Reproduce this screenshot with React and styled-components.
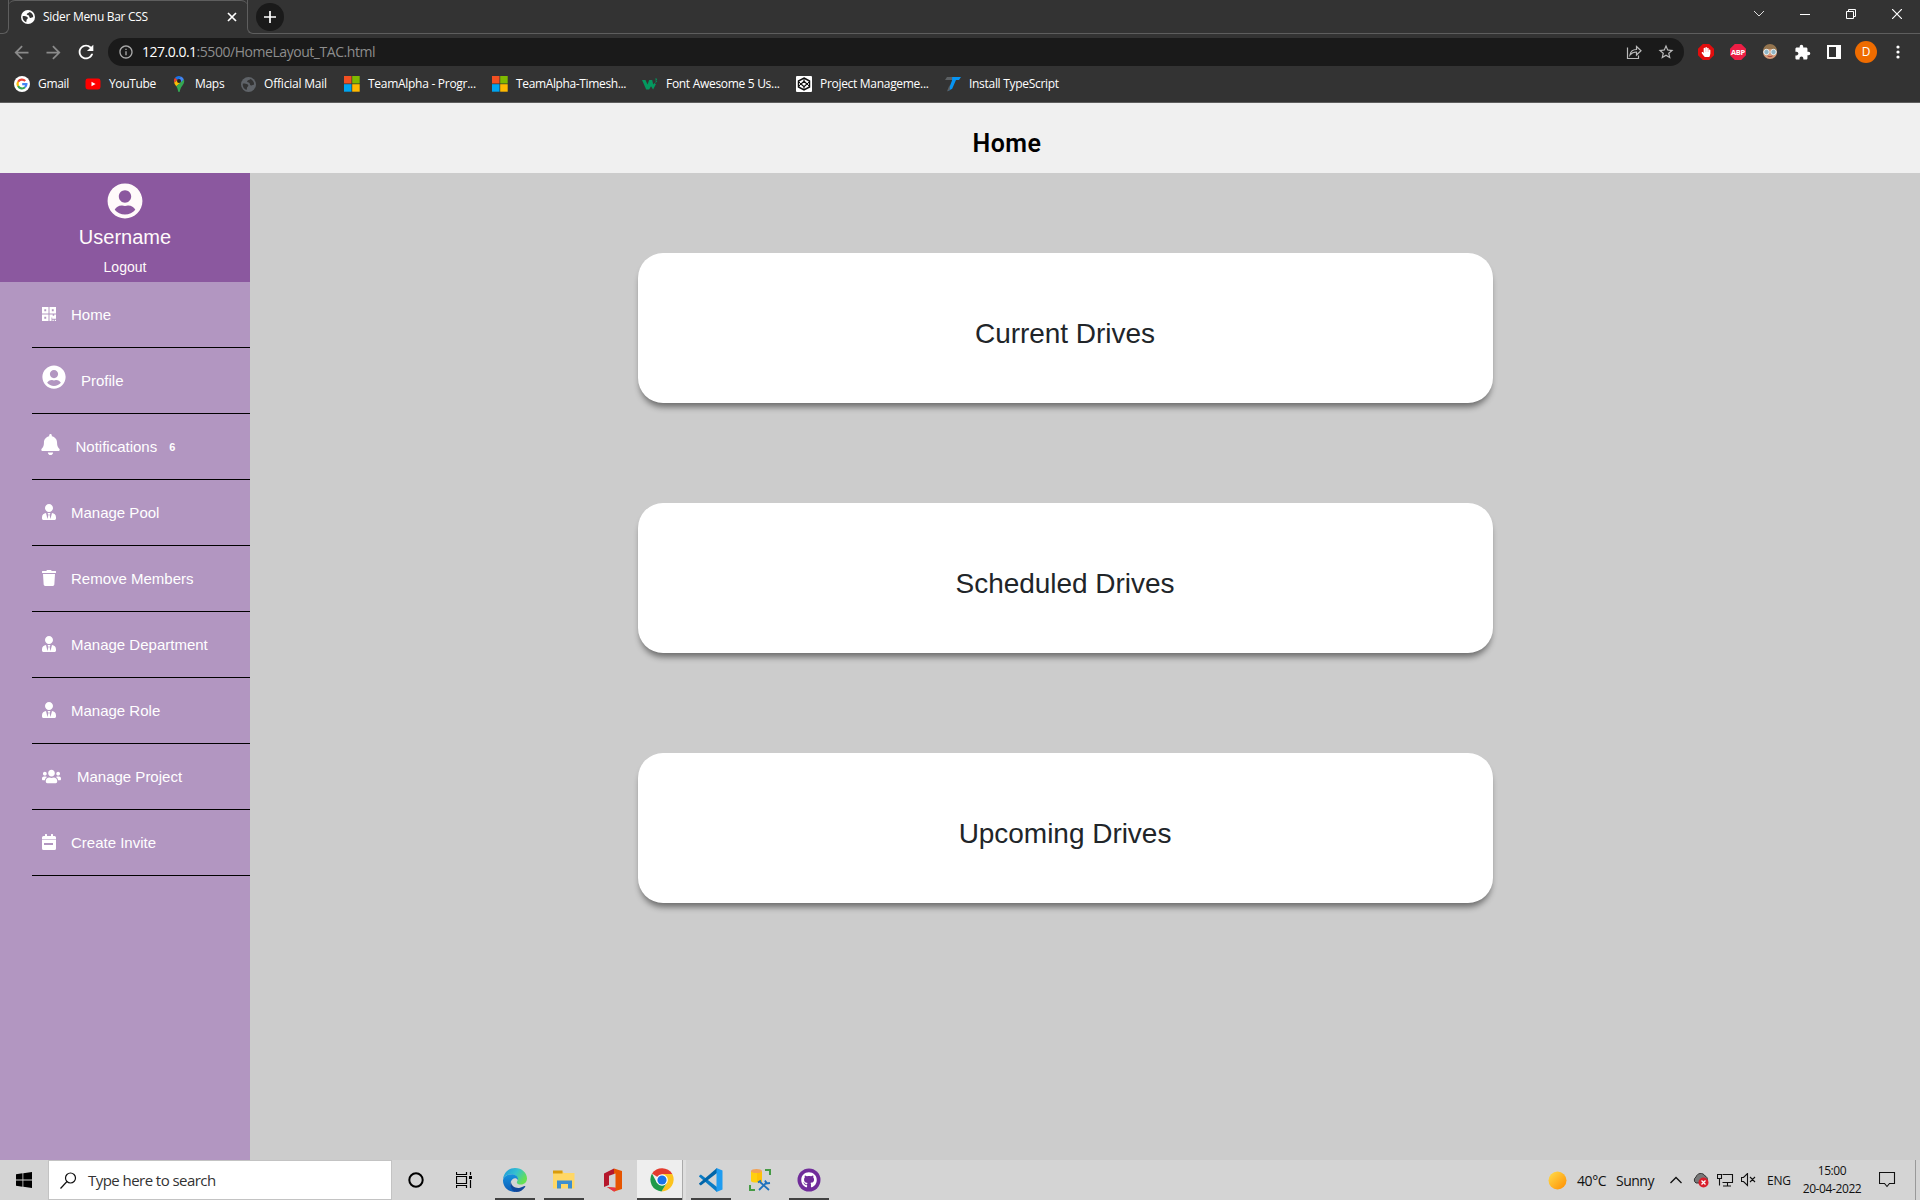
import React from "react";
import styled, { createGlobalStyle } from "styled-components";
import { FaUserCircle, FaBell, FaUserTie, FaTrash, FaUsers, FaHandPaper, FaGithub } from "react-icons/fa";
import { MdExtension, MdStarBorder, MdInfoOutline, MdRefresh, MdArrowBack, MdArrowForward } from "react-icons/md";

const Global = createGlobalStyle`
  * { box-sizing: border-box; }
  body { margin: 0; overflow: hidden; font-family: "Liberation Sans", Arial, sans-serif; }
  svg { display: block; flex: none; }
`;

const Screen = styled.div`
  width: 1920px;
  height: 1200px;
  display: flex;
  flex-direction: column;
`;

const Label = styled.span`
  font-family: "Open Sans", "Noto Sans", sans-serif;
  font-size: ${(p) => p.$size || 12}px;
  letter-spacing: ${(p) => p.$ls || 0}px;
  color: ${(p) => p.$color || "#fff"};
  font-weight: ${(p) => p.$weight || 400};
  white-space: nowrap;
`;

/* ---------- browser ---------- */
const Browser = styled.header`
  height: 103px;
  flex: none;
  background: #333;
  border-bottom: 1px solid #5e5e5e;
`;
const TabStrip = styled.div`
  height: 34px;
  display: flex;
`;
const TabEdge = styled.div`
  width: ${(p) => p.$w || "8px"};
  flex: ${(p) => (p.$grow ? 1 : "none")};
  border-bottom: 1px solid #5e5e5e;
  ${(p) => p.$side === "left" && "border-bottom-right-radius: 6px; border-right: 1px solid #5e5e5e;"}
  ${(p) => p.$side === "right" && "border-bottom-left-radius: 6px; border-left: 1px solid #5e5e5e;"}
  display: flex;
  align-items: flex-start;
`;
const Tab = styled.div`
  width: 240px;
  margin: 0 -1px;
  border-top: 1px solid #5e5e5e;
  border-radius: 7px 7px 0 0;
  display: flex;
  align-items: center;
  padding: 0 11px 1px 13px;
`;
const TabTitle = styled.div`
  flex: 1;
  padding: 0 0 1px 8px;
  line-height: 16px;
`;
const NewTab = styled.div`
  width: 28px;
  height: 28px;
  border-radius: 50%;
  background: #1a1a1a;
  margin: 3px 0 0 8px;
  display: grid;
  place-items: center;
`;
const WindowButtons = styled.div`
  margin-left: auto;
  height: 28px;
  display: flex;
`;
const WindowButton = styled.div`
  width: 46px;
  display: grid;
  place-items: center;
`;
const Toolbar = styled.div`
  height: 36px;
  display: flex;
  align-items: center;
`;
const NavButtons = styled.div`
  width: 108px;
  display: flex;
  align-items: center;
  gap: 11px;
  padding-left: 11px;
`;
const Address = styled.div`
  width: 1576px;
  height: 28px;
  border-radius: 14px;
  background: #1a1a1a;
  display: flex;
  align-items: center;
  padding: 0 9px 0 10px;
`;
const AddressText = styled.div`
  flex: 1;
  padding-left: 8px;
  line-height: 18px;
`;
const AddressActions = styled.div`
  display: flex;
  gap: 15px;
  align-items: center;
`;
const Extensions = styled.div`
  display: flex;
  align-items: center;
  flex: 1;
  padding-left: 6px;
`;
const ExtSlot = styled.div`
  width: 32px;
  display: flex;
  justify-content: center;
`;
const Avatar = styled.div`
  width: 22px;
  height: 22px;
  border-radius: 50%;
  background: #ef6c00;
  display: grid;
  place-items: center;
  line-height: 22px;
`;
const Octagon = styled.div`
  width: 16px;
  height: 16px;
  clip-path: polygon(30% 0, 70% 0, 100% 30%, 100% 70%, 70% 100%, 30% 100%, 0 70%, 0 30%);
  background: ${(p) => p.$bg};
  display: grid;
  place-items: center;
  line-height: 16px;
`;
const Bookmarks = styled.div`
  height: 28px;
  display: flex;
  align-items: center;
`;
const Bookmark = styled.div`
  width: ${(p) => p.$w}px;
  padding-left: 14px;
  display: flex;
  align-items: center;
  gap: 8px;
  line-height: 16px;
`;

/* ---------- page ---------- */
const PageHeader = styled.div`
  height: 70px;
  flex: none;
  background: #f0f0f0;
  display: flex;
  justify-content: center;
  padding: 25px 0 0 94px;
`;
const PageTitle = styled.h1`
  margin: 0;
  font-family: Roboto, sans-serif;
  font-size: 25px;
  line-height: 32px;
  font-weight: 600;
  letter-spacing: 0.5px;
  color: #000;
`;
const PageBody = styled.div`
  flex: 1;
  min-height: 0;
  display: flex;
  background: #ccc;
`;
const Sidebar = styled.aside`
  width: 250px;
  background: #b296c1;
`;
const Profile = styled.div`
  height: 109px;
  background: #8b589f;
  color: #fffafa;
  display: flex;
  flex-direction: column;
  align-items: center;
  padding-top: 10px;
`;
const UserName = styled.div`
  font-size: 20px;
  line-height: 24px;
  margin-top: 6px;
`;
const Logout = styled.div`
  font-size: 14px;
  line-height: 18px;
  margin-top: 9px;
`;
const Menu = styled.ul`
  list-style: none;
  margin: 0;
  padding: 0 0 0 32px;
`;
const MenuItem = styled.li`
  height: 66px;
  border-bottom: 1px solid #000;
  padding-left: 10px;
  display: flex;
  align-items: center;
  color: #fff;
  font-size: 15px;
  line-height: 20px;
`;
const MenuIcon = styled.span`
  width: ${(p) => p.$w}px;
  margin-right: ${(p) => p.$gap || 15}px;
  padding-bottom: ${(p) => p.$lift || 0}px;
  display: flex;
  justify-content: center;
`;
const Count = styled.b`
  font-size: 11px;
  margin-left: 12px;
`;
const Content = styled.main`
  flex: 1;
  padding: 80px 0 0 388px;
  display: flex;
  flex-direction: column;
  gap: 100px;
`;
const Card = styled.section`
  width: 855px;
  height: 150px;
  border-radius: 25px;
  background: #fff;
  box-shadow: 0 6px 6px -2px rgba(0, 0, 0, 0.47);
  display: flex;
  align-items: center;
  justify-content: center;
  padding: 11px 1px 0 0;
  font-size: 28px;
  letter-spacing: -0.03px;
  color: #212529;
`;

/* ---------- taskbar ---------- */
const Taskbar = styled.footer`
  height: 40px;
  flex: none;
  background: #d4d4d4;
  display: flex;
`;
const Start = styled.div`
  width: 48px;
  display: grid;
  place-items: center;
`;
const Search = styled.div`
  width: 344px;
  border: 1px solid #c3c3c3;
  background: #fff;
  display: flex;
  align-items: center;
  gap: 11px;
  padding-left: 11px;
`;
const SystemButton = styled.div`
  width: 48px;
  display: grid;
  place-items: center;
`;
const Apps = styled.div`
  display: flex;
  padding-left: 2px;
`;
const TaskButton = styled.div`
  width: ${(p) => (p.$active ? 46 : 49)}px;
  margin-right: ${(p) => (p.$active ? 3 : 0)}px;
  display: grid;
  place-items: center;
  background: ${(p) => (p.$active ? "#eee" : "transparent")};
  border-right: ${(p) => (p.$active ? "1px solid #aaa" : "0")};
  box-shadow: ${(p) => (p.$active ? "3px 0 0 #dedede" : "none")};
`;
const Running = styled.div`
  width: ${(p) => (p.$wide ? 45 : 40)}px;
  height: 40px;
  padding-left: ${(p) => (p.$wide ? 4 : 0)}px;
  border-bottom: 2px solid ${(p) => (p.$on ? "#424242" : "transparent")};
  padding-top: 1px;
  display: grid;
  place-items: center;
`;
const Tray = styled.div`
  margin-left: auto;
  display: flex;
  align-items: center;
`;
const TrayItem = styled.div`
  width: ${(p) => p.$w}px;
  padding-right: ${(p) => p.$pr || 0}px;
  display: flex;
  align-items: center;
  justify-content: ${(p) => p.$justify || "flex-start"};
`;
const Clock = styled.div`
  width: 62px;
  display: flex;
  flex-direction: column;
  align-items: center;
  line-height: 18px;
`;
const ShowDesktop = styled.div`
  width: 5px;
  height: 40px;
  border-left: 1px solid #999;
`;

const stroke = (color, width = 1) => ({ fill: "none", stroke: color, strokeWidth: width });

const GlobeIcon = ({ color, bg = "#333", size = 14 }) => (
  <svg width={size} height={size} viewBox="0 0 14 14">
    <circle cx="7" cy="7" r="7" fill={color} />
    <path d="M1.600 6.300C3 5.900 4.400 5.900 6 6.800c1.400.9.900 1.900 0 2.500-.8.600-.1 1.400-.9 2.900C2.800 11.300 1.400 9 1.600 6.300z" fill={bg} />
    <path d="M8.600 1.900C8.200 3 6.200 2.800 5.700 4c-.3 1.100 1.600.8 2.200 1.600.6.900.2 2 1.400 2.300 1.100.3 1.500-.6 2.900-.6C12.500 4.800 10.800 2.500 8.600 1.900z" fill={bg} />
  </svg>
);
const GoogleIcon = () => (
  <svg width="16" height="16" viewBox="0 0 16 16">
    <circle cx="8" cy="8" r="8" fill="#fff" />
    <g fill="none" strokeWidth="2.2">
      <path d="M4.1 5.8A4.4 4.4 0 0 1 11.2 5" stroke="#ea4335" />
      <path d="M4.1 10.1A4.4 4.4 0 0 1 4.1 5.8" stroke="#fbbc05" />
      <path d="M11 11.3A4.4 4.4 0 0 1 4.1 10.1" stroke="#34a853" />
      <path d="M8.2 8.1H12.4A4.4 4.4 0 0 1 11 11.3" stroke="#4285f4" />
    </g>
  </svg>
);
const YoutubeIcon = () => (
  <svg width="16" height="16" viewBox="0 0 16 16">
    <rect x="0.5" y="2.5" width="15" height="11" rx="2.4" fill="#f00" />
    <path d="M6.5 5.8 10.6 8l-4.1 2.2z" fill="#fff" />
  </svg>
);
const MapsIcon = () => (
  <svg width="16" height="16" viewBox="0 0 16 16">
    <path d="M8 0a5.2 5.2 0 0 0-4 1.8L6.5 4 10 .4A5 5 0 0 0 8 0z" fill="#1a73e8" />
    <path d="M4 1.8a5.2 5.2 0 0 0-.9 4.9L6.5 4z" fill="#ea4335" />
    <path d="M10 .4 6.5 4l3.6 2.9 2.8-3.3A5 5 0 0 0 10 .4z" fill="#4285f4" />
    <path d="M3.1 6.7c.4 1.2 1.3 2.3 2.2 3.5L10 6.7 6.5 4z" fill="#fbbc04" />
    <path d="M12.9 3.5c1.6 4.5-3.6 6.5-4.1 12-.2.7-1.4.7-1.6 0-.3-2-.9-3.8-1.9-5.3z" fill="#34a853" />
    <circle cx="8" cy="5.1" r="2" fill="#222" />
  </svg>
);
const MicrosoftIcon = () => (
  <svg width="16" height="16" viewBox="0 0 16 16">
    <path fill="#f25022" d="M0 0h7.5v7.5H0z" />
    <path fill="#7fba00" d="M8.2 0h7.5v7.5H8.2z" />
    <path fill="#00a4ef" d="M0 8.2h7.5v7.5H0z" />
    <path fill="#ffb900" d="M8.2 8.2h7.5v7.5H8.2z" />
  </svg>
);
const W3Icon = () => (
  <svg width="16" height="16" viewBox="0 0 16 16">
    <path d="M0 4h3.500l2 4.600L7.200 4h3l1 4.400L12.400 7l1.500 1.200-2.800 5.300L9 10.300 7.200 13.500H4.200z" fill="#04985f" />
    <path d="M13 3h2l-1.2 1.4q1.2.2.6 1.5l-1.2.4" {...stroke("#04985f", 0.8)} />
  </svg>
);
const CodepenIcon = () => (
  <svg width="16" height="16" viewBox="0 0 16 16">
    <rect width="16" height="16" rx="1" fill="#fff" />
    <path d="M8 2 13.500 5v6L8 14 2.500 11V5z" {...stroke("#111", 1.5)} />
    <path d="M8 5.300 11 8l-3 2.700L5 8z" {...stroke("#111", 1.2)} />
    <path d="M8 2v3.300M8 10.700V14M2.500 5.500 5 8l-2.500 2.500M13.500 5.500 11 8l2.500 2.500" {...stroke("#111", 1)} />
  </svg>
);
const TsIcon = () => (
  <svg width="16" height="16" viewBox="0 0 16 16">
    <path d="M2 1h6L7 4H0z" fill="#5c6063" />
    <path d="M7.2 1H16l-2 3h-3L7.2 12.8 3 15 7 4.5z" fill="#0794f2" />
    <path d="M4.5 9 2 15.5l3-1.5z" fill="#5c6063" />
  </svg>
);

const BOOKMARKS = [
  { icon: <GoogleIcon />, text: "Gmail", w: 71, ls: -0.3 },
  { icon: <YoutubeIcon />, text: "YouTube", w: 86, ls: -0.35 },
  { icon: <MapsIcon />, text: "Maps", w: 70, ls: -0.3 },
  { icon: <GlobeIcon color="#5f6368" size={15} />, text: "Official Mail", w: 103, ls: -0.2 },
  { icon: <MicrosoftIcon />, text: "TeamAlpha - Progr...", w: 148, ls: -0.28 },
  { icon: <MicrosoftIcon />, text: "TeamAlpha-Timesh...", w: 150, ls: -0.36 },
  { icon: <W3Icon />, text: "Font Awesome 5 Us...", w: 154, ls: -0.3 },
  { icon: <CodepenIcon />, text: "Project Manageme...", w: 149, ls: -0.3 },
  { icon: <TsIcon />, text: "Install TypeScript", w: 140, ls: -0.3 },
];

const QrIcon = () => (
  <svg width="14" height="14" viewBox="0 0 14 14" fill="#fff">
    <path fillRule="evenodd" d="M0 0h6.500v6.500H0zM2.300 2.300v1.900h1.900V2.300zM7.500 0H14v6.500H7.500zM9.800 2.300v1.900h1.900V2.300zM0 7.500h6.500V14H0zM2.300 9.800v1.900h1.900V9.800z" />
    <path d="M7.500 7.500h3.200v1.300h1.500V7.500H14v4.200h-3.800v-1.200h-.7V14h-2zM10.500 12.800h1.200V14h-1.200zM12.800 12.800H14V14h-1.200z" />
  </svg>
);
const InviteIcon = () => (
  <svg width="14" height="16" viewBox="0 0 14 16" fill="#fff">
    <path d="M3 .4q0-.4.400-.4h1.200q.4 0 .4.400V2h4V.4q0-.4.400-.4h1.200q.4 0 .4.400V2h1.500Q14 2 14 3.500V5H0V3.500Q0 2 1.500 2H3z" />
    <path fillRule="evenodd" d="M0 6h14v8.500q0 1.500-1.500 1.500h-11Q0 16 0 14.500zM2 9v2h9V9z" />
    <path d="M0 5h14v1H0z" opacity=".45" />
  </svg>
);

const MENU = [
  { text: "Home", icon: <QrIcon />, w: 14, lift: 1 },
  { text: "Profile", icon: <FaUserCircle size={24} />, w: 24, lift: 7 },
  { text: "Notifications", icon: <FaBell size={21} />, w: 17.5, gap: 16, lift: 4, count: 6 },
  { text: "Manage Pool", icon: <FaUserTie size={16} />, w: 13.5, gap: 15.5, lift: 1 },
  { text: "Remove Members", icon: <FaTrash size={16} />, w: 13.5, gap: 15.5, lift: 2 },
  { text: "Manage Department", icon: <FaUserTie size={16} />, w: 13.5, gap: 15.5, lift: 1 },
  { text: "Manage Role", icon: <FaUserTie size={16} />, w: 13.5, gap: 15.5, lift: 1 },
  { text: "Manage Project", icon: <FaUsers size={19} />, w: 19, gap: 16, lift: 1 },
  { text: "Create Invite", icon: <InviteIcon />, w: 14, lift: 2 },
];

const EdgeIcon = () => (
  <svg width="24" height="24" viewBox="0 0 24 24">
    <defs>
      <linearGradient id="eg" x1="0" x2="1" y1="0" y2=".5"><stop offset="0" stopColor="#1a94dc" /><stop offset=".55" stopColor="#35c1d0" /><stop offset="1" stopColor="#66e052" /></linearGradient>
      <linearGradient id="eb" x1="0" x2="0" y1="0" y2="1"><stop offset="0" stopColor="#1593df" /><stop offset="1" stopColor="#0d5bb5" /></linearGradient>
    </defs>
    <path d="M0 11.500C.6 4.500 6 0 12 0c7 0 12 5 12 10.500 0 3.800-2.800 6-6 6-3.300 0-4.600-1.400-4-2.700 2.200-3.500-.8-7.600-5-7.600C4.500 6.200 1.300 8.500 0 11.500z" fill="url(#eg)" />
    <path d="M0 12C.8 8.500 4.500 6.200 9 6.200c4 0 6.600 3 6 6-1-2-3.600-2.500-5.500-1C5.500 14.500 8 22 14 23.800 6 25-.2 19 0 12z" fill="url(#eb)" />
    <path d="M8 13.500c0 4.600 4.500 7.200 9 6.300 2-.4 3.600-1.500 4.800-1.700.5 0 .6.400.3.800C20 22 17 24 13.500 24 8.500 23.300 6.300 17.500 8 13.500z" fill="#11489b" />
  </svg>
);
const FolderIcon = () => (
  <svg width="24" height="22" viewBox="0 0 24 22">
    <path d="M1 2h9l2 2h10.500v15.500H1z" fill="#ffd766" />
    <path d="M1 1.500h9.500v3H1z" fill="#d99b0b" />
    <path d="M5 11.500h15V19.500h-4V15H9v4.500H5z" fill="#3c8ed0" />
  </svg>
);
const OfficeIcon = () => (
  <svg width="20" height="24" viewBox="0 0 20 24">
    <path d="M1 5.500 11 .5V6L6 7.800V17l-5 2z" fill="#b5172c" />
    <path d="m11 .5 8 2.500v18l-8 2.500-7-4.500 8.500.8V5.500L11 6z" fill="#e65400" />
    <path d="m4 19 8.500.8V23L11 23.500z" fill="#e8344c" />
  </svg>
);
const ChromeIcon = () => (
  <svg width="24" height="24" viewBox="0 0 24 24">
    <path d="M12 12 2 5.500A12 12 0 0 1 22.300 6z" fill="#e33b2e" />
    <path d="M12 6h10.300A12 12 0 0 1 11.500 23.500L17 14.500z" fill="#fcc31e" />
    <path d="M2 5.500A12 12 0 0 0 11.500 23.500L17 14.600 7 15z" fill="#1e9a4a" />
    <circle cx="12" cy="12" r="5.800" fill="#fff" />
    <circle cx="12" cy="12" r="4.600" fill="#1a73e8" />
  </svg>
);
const CodeIcon = () => (
  <svg width="24" height="24" viewBox="0 0 24 24">
    <path d="m0 8 1.800-1.600L18 19v5L0 8.500z" fill="#0a7bc4" />
    <path d="m0 16 1.800 1.600L18 5V0L0 15.500z" fill="#0065a9" />
    <path d="m17.500 0 6 2.500v19l-6 2.500z" fill="#1f9cf0" />
  </svg>
);
const SqlToolsIcon = () => (
  <svg width="24" height="24" viewBox="0 0 24 24">
    <path d="M3 3v10c0 2 11 2 11 0V3z" fill="#ffcf0f" />
    <path d="M9 4h5v10H9z" fill="#ffb900" opacity=".6" />
    <ellipse cx="8.500" cy="3" rx="5.500" ry="2" fill="#f2a256" />
    <path d="M17 2h5v5M2 17v5h5" {...stroke("#459b45", 2)} />
    <path d="m11 22 8-8M12 14l9 8" {...stroke("#1f72bd", 1.8)} />
    <path d="M10 14.500l3-2M17 12.500l1.500 3 3.500-.5" {...stroke("#1f72bd", 1.8)} />
  </svg>
);
const GithubDesktopIcon = () => (
  <svg width="24" height="24" viewBox="0 0 24 24">
    <circle cx="12" cy="12" r="11.500" fill="#702c9a" />
    <g transform="translate(4 4)"><FaGithub size={16} color="#fff" /></g>
  </svg>
);

const APPS = [
  { name: "edge", icon: <EdgeIcon />, on: true },
  { name: "explorer", icon: <FolderIcon />, on: true },
  { name: "office", icon: <OfficeIcon /> },
  { name: "chrome", icon: <ChromeIcon />, on: true, active: true },
  { name: "code", icon: <CodeIcon />, on: true },
  { name: "sql", icon: <SqlToolsIcon /> },
  { name: "github", icon: <GithubDesktopIcon />, on: true },
];

function BrowserChrome() {
  return (
    <Browser>
      <TabStrip>
        <TabEdge $side="left" $w="9px" />
        <Tab>
          <GlobeIcon color="#fff" size={14} />
          <TabTitle><Label $ls={-0.3}>Sider Menu Bar CSS</Label></TabTitle>
          <svg width="10" height="10" viewBox="0 0 10 10"><path d="m1 1 8 8M9 1 1 9" {...stroke("#fff", 1.7)} /></svg>
        </Tab>
        <TabEdge $side="right" $grow>
          <NewTab><svg width="12" height="12" viewBox="0 0 12 12"><path d="M6 0v12M0 6h12" {...stroke("#fff", 1.7)} /></svg></NewTab>
          <WindowButtons>
            <WindowButton><svg width="12" height="8" viewBox="0 0 12 8"><path d="m1 1 5 5 5-5" {...stroke("#ddd")} /></svg></WindowButton>
            <WindowButton><svg width="10" height="2"><path d="M0 1.5h10" {...stroke("#fff")} /></svg></WindowButton>
            <WindowButton><svg width="10" height="10"><path d="M.5 2.500h7v7h-7zM2.500 2.500v-2h7v7h-2" {...stroke("#fff")} /></svg></WindowButton>
            <WindowButton><svg width="10" height="10"><path d="m0 0 10 10M10 0 0 10" {...stroke("#fff", 1.2)} /></svg></WindowButton>
          </WindowButtons>
        </TabEdge>
      </TabStrip>
      <Toolbar>
        <NavButtons>
          <MdArrowBack size={21} color="#8b8b8b" />
          <MdArrowForward size={21} color="#8b8b8b" />
          <MdRefresh size={22} color="#fff" />
        </NavButtons>
        <Address>
          <MdInfoOutline size={16} color="#aaa" />
          <AddressText>
            <Label $size={14} $ls={-0.5}>127.0.0.1</Label>
            <Label $size={14} $ls={-0.45} $color="#8d8d8d">:5500/HomeLayout_TAC.html</Label>
          </AddressText>
          <AddressActions>
            <svg width="16" height="16" viewBox="0 0 16 16"><path d="M1.500 3.500v11h11v-3M4 11c.5-4 3-5.500 6.500-5.500v-3L15 6.800 10.500 11V8C7.500 8 5.500 9 4 11z" {...stroke("#bbb", 1.2)} /></svg>
            <MdStarBorder size={18} color="#bbb" />
          </AddressActions>
        </Address>
        <Extensions>
          <ExtSlot><Octagon $bg="#e10d0d"><FaHandPaper size={10} color="#fff" /></Octagon></ExtSlot>
          <ExtSlot><Octagon $bg="#ed1e45"><Label $size={7.5} $weight={700} $ls={-0.3}>ABP</Label></Octagon></ExtSlot>
          <ExtSlot>
            <svg width="16" height="16" viewBox="0 0 16 16">
              <circle cx="8" cy="8" r="7" fill="#d79b77" />
              <path d="M1 7a7 7 0 0 1 14 0L11 5H4z" fill="#94744e" />
              <path d="M5.500 12q2.500 1.500 5 0" {...stroke("#a44", 1)} />
              <circle cx="4.500" cy="8" r="2.700" fill="#8fb5c6" stroke="#e8f1f5" />
              <circle cx="11.500" cy="8" r="2.700" fill="#8fb5c6" stroke="#e8f1f5" />
            </svg>
          </ExtSlot>
          <ExtSlot><MdExtension size={17} color="#fff" /></ExtSlot>
          <ExtSlot><svg width="14" height="14"><path fill="#fff" fillRule="evenodd" d="M0 0h14v14H0zM2 2v10h7V2z" /></svg></ExtSlot>
          <ExtSlot><Avatar><Label $size={12}>D</Label></Avatar></ExtSlot>
          <ExtSlot><svg width="4" height="14" fill="#fff"><circle cx="2" cy="2" r="1.6" /><circle cx="2" cy="7" r="1.6" /><circle cx="2" cy="12" r="1.6" /></svg></ExtSlot>
        </Extensions>
      </Toolbar>
      <Bookmarks>
        {BOOKMARKS.map((b) => (
          <Bookmark key={b.text} $w={b.w}>{b.icon}<Label $ls={b.ls}>{b.text}</Label></Bookmark>
        ))}
      </Bookmarks>
    </Browser>
  );
}

function WindowsTaskbar() {
  return (
    <Taskbar>
      <Start><svg width="16" height="16" viewBox="0 0 16 16"><path d="M0 2.200 6.500 1.300v6.300H0zM7.300 1.200 16 0v7.600H7.300zM0 8.400h6.500v6.300L0 13.800zM7.300 8.400H16V16l-8.700-1.200z" /></svg></Start>
      <Search>
        <svg width="17" height="17" viewBox="0 0 17 17"><circle cx="10.500" cy="6" r="5" {...stroke("#111", 1.2)} /><path d="m7 9.500-6.500 7" {...stroke("#111", 1.2)} /></svg>
        <Label $size={15} $color="#333" $ls={-0.55}>Type here to search</Label>
      </Search>
      <SystemButton><svg width="16" height="16"><circle cx="8" cy="8" r="6.700" {...stroke("#000", 2)} /></svg></SystemButton>
      <SystemButton><svg width="16" height="16"><path d="M.5 0v2.500h10V0M.5 4.500h10v7H.5zM.5 16v-2.500h10V16M14.500 0v3M14.500 8v8" {...stroke("#000", 1.2)} /><path d="M13 4h3v3h-3z" /></svg></SystemButton>
      <Apps>
        {APPS.map((a) => (
          <TaskButton key={a.name} $active={a.active}><Running $on={a.on} $wide={a.active}>{a.icon}</Running></TaskButton>
        ))}
      </Apps>
      <Tray>
        <TrayItem $w={29}><svg width="19" height="19"><defs><linearGradient id="sun" x1="0" x2="1" y1="0" y2="1"><stop stopColor="#ffdf4d" /><stop offset="1" stopColor="#ff8c00" /></linearGradient></defs><circle cx="9.500" cy="9.500" r="9" fill="url(#sun)" /></svg></TrayItem>
        <TrayItem $w={39}><Label $size={14} $color="#111" $ls={-0.4}>40°C</Label></TrayItem>
        <TrayItem $w={54}><Label $size={14} $color="#111" $ls={-0.5}>Sunny</Label></TrayItem>
        <TrayItem $w={22}><svg width="12" height="8"><path d="m.5 7 5.500-5.500L11.500 7" {...stroke("#111", 1.3)} /></svg></TrayItem>
        <TrayItem $w={25}><svg width="17" height="16"><path d="M4 11a3.500 3.500 0 0 1 0-6C5 1 11 0 13 4c3 1 3 5 1 7z" fill="#777" stroke="#333" /><circle cx="11.500" cy="10.500" r="5" fill="#d91f2c" /><path d="m9.500 8.500 4 4M13.500 8.500l-4 4" {...stroke("#fff", 1.3)} /></svg></TrayItem>
        <TrayItem $w={24}><svg width="17" height="14"><path d="M5.500 1.500h10v8h-10M.5 1.500h4v4h-4zM2.500 5.500v7M10.500 10v3M6 13h8" {...stroke("#111", 1.1)} /></svg></TrayItem>
        <TrayItem $w={26}><svg width="15" height="14"><path d="M.5 4.500h2l4-4v12l-4-4h-2zM9 4l5 5M14 4 9 9" {...stroke("#111", 1.1)} /></svg></TrayItem>
        <TrayItem $w={34}><Label $size={12} $color="#111" $ls={-0.2}>ENG</Label></TrayItem>
        <Clock><Label $color="#111" $ls={-0.4}>15:00</Label><Label $color="#111" $ls={-0.4}>20-04-2022</Label></Clock>
        <TrayItem $w={52} $pr={3} $justify="center"><svg width="17" height="16"><path d="M.5.5h15v11h-5l-2.500 3-2.500-3h-5z" {...stroke("#111", 1.1)} /></svg></TrayItem>
        <ShowDesktop />
      </Tray>
    </Taskbar>
  );
}

export default function App() {
  return (
    <Screen>
      <Global />
      <BrowserChrome />
      <PageHeader><PageTitle>Home</PageTitle></PageHeader>
      <PageBody>
        <Sidebar>
          <Profile>
            <FaUserCircle size={36} />
            <UserName>Username</UserName>
            <Logout>Logout</Logout>
          </Profile>
          <Menu>
            {MENU.map((m) => (
              <MenuItem key={m.text}>
                <MenuIcon $w={m.w} $gap={m.gap} $lift={m.lift}>{m.icon}</MenuIcon>
                {m.text}
                {m.count && <Count>{m.count}</Count>}
              </MenuItem>
            ))}
          </Menu>
        </Sidebar>
        <Content>
          <Card>Current Drives</Card>
          <Card>Scheduled Drives</Card>
          <Card>Upcoming Drives</Card>
        </Content>
      </PageBody>
      <WindowsTaskbar />
    </Screen>
  );
}
